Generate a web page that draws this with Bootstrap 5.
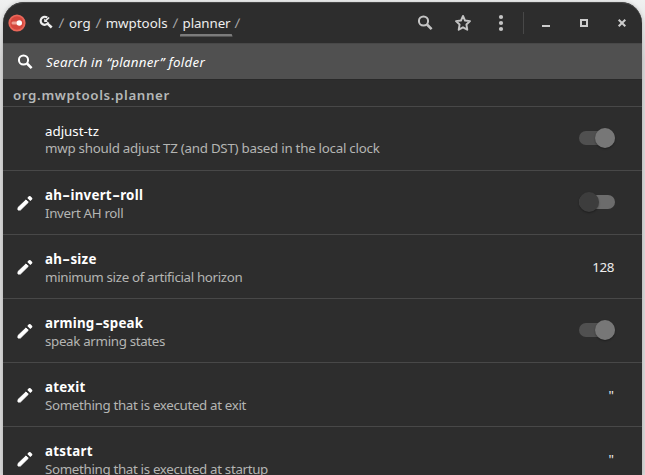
<!DOCTYPE html>
<html lang="en">
<head>
<meta charset="utf-8">
<title>planner</title>
<link href="https://cdn.jsdelivr.net/npm/bootstrap@5.3.0/dist/css/bootstrap.min.css" rel="stylesheet">
<style>
body{background:#dcdcdc linear-gradient(#f0f1f1,#d8d8d8 60px);font:13.33px/18px "Noto Sans","Open Sans",sans-serif;color:#eee;height:475px}
.window{margin:2px 3px 0;width:639px;height:473px;background:#2d2d2d;border-radius:21px 21px 0 0;box-shadow:inset 0 1px #484848,0 0 4px #0003}
.topbar{height:41px;padding-left:5px;padding-right:4px}
.crumbs{margin-left:12px}
.sep{color:#aaa;width:15px;text-align:center}
.sep i{display:inline-block;font-style:normal;transform:skewX(-5deg)}
.current{position:relative;letter-spacing:-.1px}
.current::after{content:"";position:absolute;left:-3px;width:53px;top:20px;height:3px;background:#7c7c7c;clip-path:polygon(1px 0,52px 0,100% 100%,0 100%)}
.tool{width:38px}
.divider{width:1px;height:22px;margin-left:3px;background:#484848}
.search{height:36px;background:#505050;border-top:1px solid #484848;padding-left:14px;color:#fff}
.search em{margin-left:13px;letter-spacing:.27px}
.section-title{height:28px;padding:6px 10px 0;color:#b5b8b8;border-bottom:1px solid #484848;border-top:1px solid #292929;font-weight:600;letter-spacing:.62px}
.entry{height:64px;border-bottom:1px solid #484848;padding-right:28px}
.pen{width:42px;padding-left:14px;padding-bottom:2px}
.label{padding-top:1px}
.key{color:#fff;line-height:17px;padding-top:1px;margin-bottom:-1px}
.changed .label{padding-top:2px}
.changed .key{font-weight:700;letter-spacing:.25px;line-height:18px;padding:0;margin:0}
.changed .key i{display:inline-block;font-style:normal;letter-spacing:0;margin:0 2px;transform:scaleX(1.7)}
.desc{color:#b4b5b3;letter-spacing:-.255px}
.changed .desc{letter-spacing:-.33px}
.number{letter-spacing:-.4px}
.toggle{width:36px;height:20px;position:relative;margin-right:-1px;margin-bottom:2px}
.toggle::before{content:"";position:absolute;left:0;right:0;top:3px;height:14px;border-radius:7px;background:#505050}
.toggle::after{content:"";position:absolute;right:0;top:0;width:20px;height:20px;border-radius:50%;background:#777;box-shadow:0 1px 2px #0005}
.toggle.off::before{background:#6c6c6c}
.toggle.off::after{right:auto;left:0;background:#3d3d3d}
</style>
</head>
<body class="m-0 overflow-hidden">
<svg class="d-none"><symbol id="pencil" viewBox="0 0 16 16"><path d="M1 12.6 9 4.9 11.3 7.2 3.4 15H1z" stroke="#fff" stroke-linejoin="round"/><path d="m10.3 3 1.5-1.7q.9-.8 1.7 0l1.5 1.5q.9.9 0 1.8L13.3 6z"/></symbol>
<symbol id="find" viewBox="0 0 16 16"><circle cx="6.5" cy="6" r="4.6" fill="none" stroke="currentColor" stroke-width="2"/><path d="m10 9.5 4.6 4.6" stroke="currentColor" stroke-width="2.6"/></symbol></svg>
<div class="window overflow-hidden">
<header class="topbar d-flex align-items-center">
<svg width="18" height="18" viewBox="0 0 18 18"><circle cx="9" cy="9" r="8.6" fill="#e9675a"/><circle cx="9" cy="9" r="6.7" fill="#d5473d"/><path d="M5 9h6" stroke="#ee9f94" stroke-width="3" stroke-linecap="round"/><circle cx="11.3" cy="9" r="2.7" fill="#fff"/></svg>
<nav class="crumbs d-flex align-items-center">
<svg width="16" height="16" viewBox="0 0 16 16" fill="none" stroke="#eee"><path d="M9.2 2.7A4 4 0 1 0 10.3 7.4" stroke-width="2.2"/><path d="m9.2 8.4 4.5 4.1" stroke-width="2.5"/><path d="M6.2 3.6v3.3h3.6z" fill="#eee" stroke="none"/><path d="m7.4 5.8 3.7-3.3" stroke-width="1.6"/></svg>
<span class="sep"><i>/</i></span><span>org</span><span class="sep"><i>/</i></span><span>mwptools</span><span class="sep"><i>/</i></span><span class="current">planner</span><span class="sep"><i>/</i></span>
</nav>
<div class="d-flex align-items-center ms-auto">
<svg class="tool" height="16" viewBox="-11 0 38 16" color="#c4c4c4"><use href="#find" width="16" height="16"/></svg>
<svg class="tool" height="18" viewBox="-10 0 38 18"><path d="m9 1.9 2 4.6 5 .6-3.6 3.4.9 5.2L9 13.3l-4.3 2.4.9-5.2L2 7.1l5-.6z" fill="none" stroke="#c4c4c4" stroke-width="1.9" stroke-linejoin="round"/></svg>
<svg class="tool" height="18" viewBox="-10 0 38 18" fill="#c4c4c4"><circle cx="9" cy="3" r="2.1"/><circle cx="9" cy="9" r="2.1"/><circle cx="9" cy="15" r="2.1"/></svg>
<div class="divider"></div>
<svg class="tool" height="16" viewBox="-14 0 38 16"><path d="M4 10h8v2H4z" fill="#ccc"/></svg>
<svg class="tool" height="16" viewBox="-14 0 38 16"><path d="M5 5h6v6H5z" fill="none" stroke="#ccc" stroke-width="2"/></svg>
<svg class="tool" height="16" viewBox="-14 0 38 16"><path d="m4.7 4.7 6.6 6.6m0-6.6-6.6 6.6" stroke="#ccc" stroke-width="2"/></svg>
</div>
</header>
<div class="search d-flex align-items-center"><svg width="16" height="16"><use href="#find"/></svg><em>Search in “planner” folder</em></div>
<div class="section-title"><span>org.mwptools.planner</span></div>
<main>
<div class="entry d-flex align-items-center"><div class="pen"></div><div class="label"><div class="key">adjust-tz</div><div class="desc">mwp should adjust TZ (and DST) based in the local clock</div></div><div class="toggle ms-auto"></div></div>
<div class="entry changed d-flex align-items-center"><div class="pen"><svg width="16" height="16" fill="#fff"><use href="#pencil"/></svg></div><div class="label"><div class="key">ah<i>-</i>invert<i>-</i>roll</div><div class="desc">Invert AH roll</div></div><div class="toggle off ms-auto"></div></div>
<div class="entry changed d-flex align-items-center"><div class="pen"><svg width="16" height="16" fill="#fff"><use href="#pencil"/></svg></div><div class="label"><div class="key">ah<i>-</i>size</div><div class="desc">minimum size of artificial horizon</div></div><div class="number ms-auto">128</div></div>
<div class="entry changed d-flex align-items-center"><div class="pen"><svg width="16" height="16" fill="#fff"><use href="#pencil"/></svg></div><div class="label"><div class="key">arming<i>-</i>speak</div><div class="desc">speak arming states</div></div><div class="toggle ms-auto"></div></div>
<div class="entry changed d-flex align-items-center"><div class="pen"><svg width="16" height="16" fill="#fff"><use href="#pencil"/></svg></div><div class="label"><div class="key">atexit</div><div class="desc">Something that is executed at exit</div></div><div class="ms-auto">"</div></div>
<div class="entry changed d-flex align-items-center"><div class="pen"><svg width="16" height="16" fill="#fff"><use href="#pencil"/></svg></div><div class="label"><div class="key">atstart</div><div class="desc">Something that is executed at startup</div></div><div class="ms-auto">"</div></div>
</main>
</div>
</body>
</html>
